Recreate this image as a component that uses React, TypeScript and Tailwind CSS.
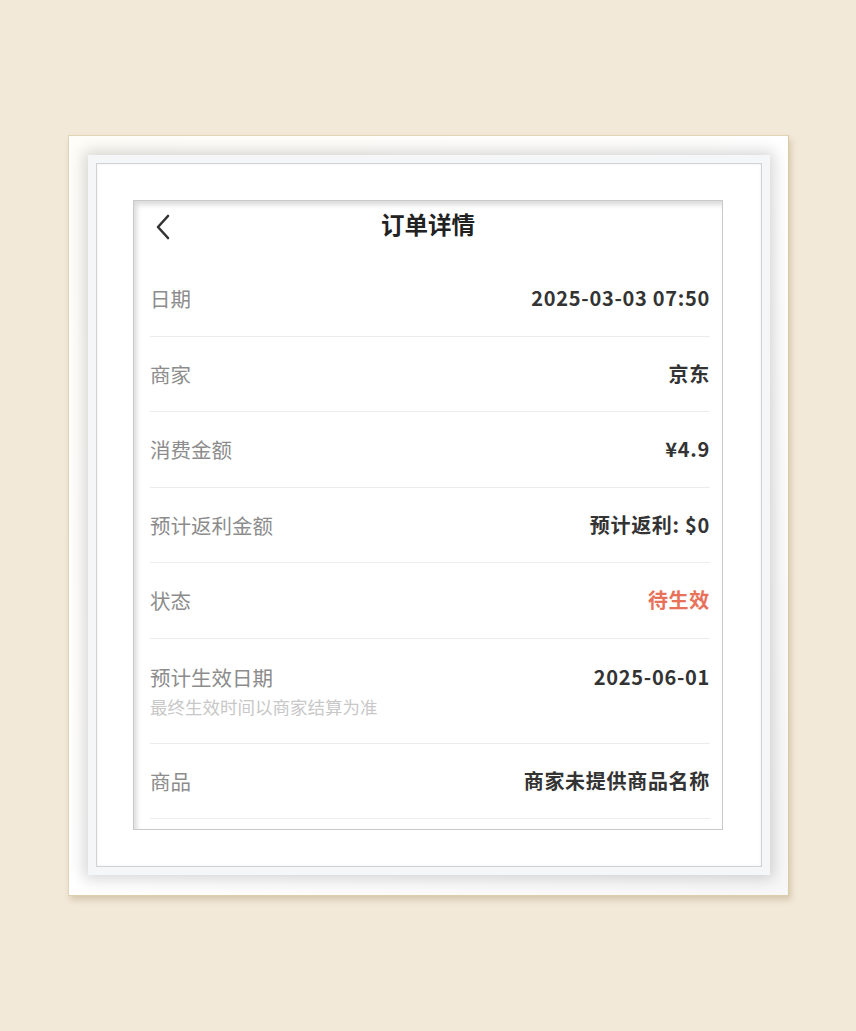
import React from "react";

type Row = { label: string; value: string; tone?: "status"; note?: string; tall?: boolean };

const rows: Row[] = [
  { label: "日期", value: "2025-03-03 07:50" },
  { label: "商家", value: "京东" },
  { label: "消费金额", value: "¥4.9" },
  { label: "预计返利金额", value: "预计返利: $0" },
  { label: "状态", value: "待生效", tone: "status" },
  { label: "预计生效日期", value: "2025-06-01", note: "最终生效时间以商家结算为准", tall: true },
  { label: "商品", value: "商家未提供商品名称" },
];

function Chevron() {
  return (
    <svg width="16" height="26" viewBox="0 0 16 26" fill="none" stroke="#333" strokeWidth="2.6" strokeLinecap="round" strokeLinejoin="round">
      <polyline points="13 2 3 13 13 24" />
    </svg>
  );
}

export default function App() {
  return (
    <div
      className="min-h-[1031px] w-[856px] bg-[#f3e9d9] pl-[68px] pt-[135px]"
      style={{ fontFamily: '"Noto Sans CJK SC", "Noto Sans", sans-serif' }}
    >
      {/* Moulding */}
      <div className="h-[761px] w-[721px] border border-[#e2d5b6] border-r-[#d9cca4] border-b-[#dccfab] bg-gradient-to-br from-[#fffdf8] via-white to-[#f7f7f7] pb-[20px] pl-[19px] pr-[18px] pt-[19px] shadow-[2px_4px_6px_rgba(140,115,70,0.28)]">
        {/* Step */}
        <div className="h-full w-full bg-[#f5f6f7] p-[8px] shadow-[0_0_14px_4px_rgba(0,0,0,0.16)]">
          {/* Mat */}
          <div className="h-full w-full border border-[#d0d3d5] bg-white pl-[36px] pt-[36px] shadow-[inset_0_0_3px_rgba(0,0,0,0.08)]">
            {/* Screenshot */}
            <div className="flex h-[630px] w-[590px] flex-col overflow-hidden border border-[#c9c9c9] bg-white shadow-[inset_3px_4px_5px_rgba(0,0,0,0.14)]">
              <div className="relative flex h-[60px] shrink-0 items-center justify-center">
                <div className="absolute left-[21px] top-[13px]">
                  <Chevron />
                </div>
                <span className="mt-[-12px] text-[23.5px] font-bold text-[#222]">订单详情</span>
              </div>
              <div className="pl-[16px] pr-[12px]">
                {rows.map((r) => (
                  <div
                    key={r.label}
                    className={`flex justify-between border-b border-[#ececec] ${
                      r.tall ? "h-[105px] items-start pt-[24px]" : "h-[75.5px] items-center"
                    }`}
                  >
                    <div className="flex flex-col">
                      <span className="text-[20.5px] leading-[28px] text-[#8c8c8c]">{r.label}</span>
                      {r.note && <span className="mt-[5px] text-[17.5px] leading-[22px] text-[#c8c8c8]">{r.note}</span>}
                    </div>
                    <span
                      className={`text-[20px] font-bold leading-[28px] tracking-[0.7px] ${
                        r.tone === "status" ? "text-[#e8715a]" : "text-[#333]"
                      }`}
                    >
                      {r.value}
                    </span>
                  </div>
                ))}
              </div>
            </div>
          </div>
        </div>
      </div>
    </div>
  );
}
